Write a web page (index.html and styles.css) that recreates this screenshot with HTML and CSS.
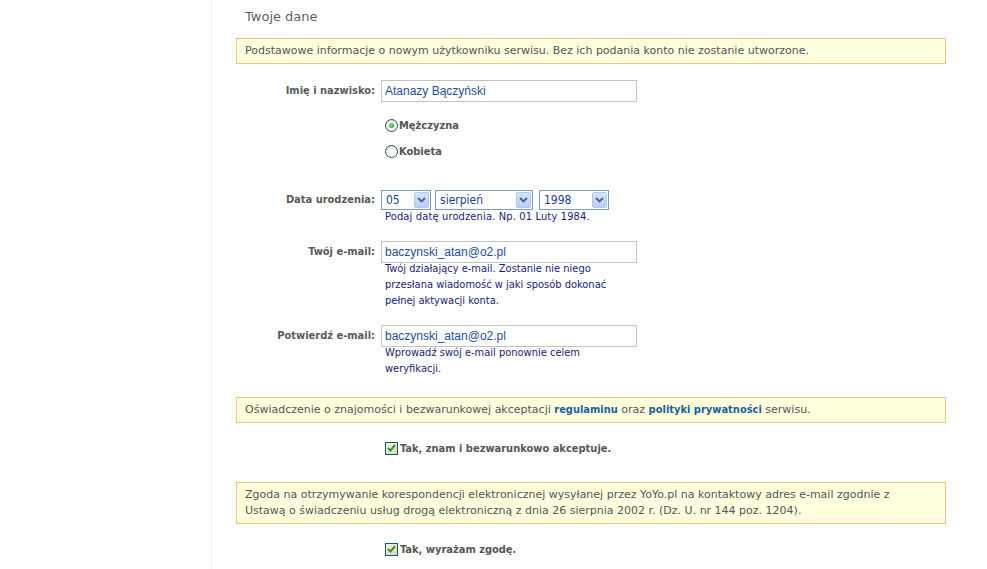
FILE: index.html
```html
<!DOCTYPE html>
<html lang="pl">
<head>
<meta charset="utf-8">
<title>Twoje dane</title>
<link rel="stylesheet" href="styles.css">
</head>
<body>
<div class="page">
  <div class="side"></div>
  <main class="content">
    <h2 class="title">Twoje dane</h2>
    <div class="notice">Podstawowe informacje o nowym użytkowniku serwisu. Bez ich podania konto nie zostanie utworzone.</div>

    <div class="form">
      <div class="row row-name">
        <label class="lbl">Imię i nazwisko:</label>
        <div class="field"><div class="input">Atanazy Bączyński</div></div>
      </div>

      <div class="row row-gender">
        <div></div>
        <div class="field">
          <div class="opt"><span class="radio checked"></span>Mężczyzna</div>
          <div class="opt"><span class="radio"></span>Kobieta</div>
        </div>
      </div>

      <div class="row row-date">
        <label class="lbl lbl-select">Data urodzenia:</label>
        <div class="field">
          <div class="selects">
            <div class="select s-day"><span class="val">05</span><span class="arrow"><svg width="9" height="6" viewBox="0 0 9 6"><path d="M1 1 L4.5 4.5 L8 1" fill="none" stroke="#4d6185" stroke-width="1.8"/></svg></span></div>
            <div class="select s-month"><span class="val">sierpień</span><span class="arrow"><svg width="9" height="6" viewBox="0 0 9 6"><path d="M1 1 L4.5 4.5 L8 1" fill="none" stroke="#4d6185" stroke-width="1.8"/></svg></span></div>
            <div class="select s-year"><span class="val">1998</span><span class="arrow"><svg width="9" height="6" viewBox="0 0 9 6"><path d="M1 1 L4.5 4.5 L8 1" fill="none" stroke="#4d6185" stroke-width="1.8"/></svg></span></div>
          </div>
          <div class="hint hint-date">Podaj datę urodzenia. Np. 01 Luty 1984.</div>
        </div>
      </div>

      <div class="row row-mail">
        <label class="lbl">Twój e-mail:</label>
        <div class="field">
          <div class="input">baczynski_atan@o2.pl</div>
          <div class="hint">Twój działający e-mail. Zostanie nie niego przesłana wiadomość w jaki sposób dokonać pełnej aktywacji konta.</div>
        </div>
      </div>

      <div class="row row-mail2">
        <label class="lbl">Potwierdź e-mail:</label>
        <div class="field">
          <div class="input">baczynski_atan@o2.pl</div>
          <div class="hint">Wprowadź swój e-mail ponownie celem weryfikacji.</div>
        </div>
      </div>
    </div>

    <div class="notice notice-terms">Oświadczenie o znajomości i bezwarunkowej akceptacji <a class="link" href="#">regulaminu</a> oraz <a class="link" href="#">polityki prywatności</a> serwisu.</div>
    <div class="row row-check">
      <div></div>
      <div class="field"><div class="opt"><span class="check"><svg width="9" height="8" viewBox="0 0 9 8"><path d="M1 4 L3.5 6.5 L8 1.2" fill="none" stroke="#21a121" stroke-width="2"/></svg></span>Tak, znam i bezwarunkowo akceptuje.</div></div>
    </div>

    <div class="notice notice-consent">Zgoda na otrzymywanie korespondencji elektronicznej wysyłanej przez YoYo.pl na kontaktowy adres e-mail zgodnie z Ustawą o świadczeniu usług drogą elektroniczną z dnia 26 sierpnia 2002 r. (Dz. U. nr 144 poz. 1204).</div>
    <div class="row row-check">
      <div></div>
      <div class="field"><div class="opt"><span class="check"><svg width="9" height="8" viewBox="0 0 9 8"><path d="M1 4 L3.5 6.5 L8 1.2" fill="none" stroke="#21a121" stroke-width="2"/></svg></span>Tak, wyrażam zgodę.</div></div>
    </div>
  </main>
</div>
</body>
</html>
```

FILE: styles.css
```css
* { box-sizing: border-box; }
html, body { margin: 0; padding: 0; background: #fff; }
body {
  font-family: "DejaVu Sans Condensed", "DejaVu Sans", Verdana, sans-serif;
  font-size: 11px;
  color: #555;
  height: 569px;
  overflow: hidden;
}
.page { display: flex; height: 569px; }
.side { width: 211px; flex: none; }
.content {
  width: 735px;
  border-left: 1px solid #eeeeee;
  padding-left: 24px;
  padding-top: 9px;
}
.title {
  margin: 0 0 13px 9px;
  font-family: "DejaVu Sans", Verdana, sans-serif;
  font-size: 13px;
  line-height: 16px;
  font-weight: normal;
  color: #5f5f5f;
}
.notice {
  border: 1px solid #f2c27f;
  background: #ffffdd;
  padding: 4px 8px;
  line-height: 16px;
  color: #555;
  font-family: "DejaVu Sans", Verdana, sans-serif;
}
.form { margin-top: 16px; }
.row {
  display: grid;
  grid-template-columns: 139px 1fr;
  column-gap: 6px;
}
.lbl {
  text-align: right;
  font-weight: bold;
  color: #5a5a5a;
  line-height: 22px;
}
.lbl-select { line-height: 20px; }
.input {
  width: 256px;
  height: 22px;
  border: 1px solid #c4c4c4;
  padding: 0 3px;
  font-family: "Liberation Sans", Arial, sans-serif;
  font-size: 12px;
  line-height: 20px;
  color: #1f4e9c;
}
.row-gender { margin-top: 10px; }
.opt {
  display: flex;
  align-items: center;
  height: 26px;
  font-weight: bold;
  color: #555;
  padding-left: 4px;
  font-size: 11px;
}
.radio {
  width: 13px;
  height: 13px;
  border-radius: 50%;
  border: 1px solid #2f4d6e;
  background: radial-gradient(circle at 60% 65%, #ffffff 0, #f2f2ee 50%, #d8d8d0 100%);
  margin-right: 1px;
  position: relative;
  flex: none;
}
.radio.checked::after {
  content: "";
  position: absolute;
  left: 3px;
  top: 3px;
  width: 5px;
  height: 5px;
  border-radius: 50%;
  background: radial-gradient(circle at 40% 40%, #9be09b 0, #2ca52c 70%);
}
.row-date { margin-top: 26px; }
.selects { display: flex; gap: 4px; }
.select {
  display: flex;
  align-items: center;
  height: 20px;
  border: 1px solid #7f9db9;
  background: #fff;
  padding: 1px;
}
.s-day { width: 50px; }
.s-month { width: 98px; }
.s-year { width: 70px; margin-left: 2px; }
.val {
  flex: 1;
  padding-left: 3px;
  font-family: "DejaVu Sans Condensed", "DejaVu Sans", sans-serif;
  font-size: 12px;
  color: #1c3f8c;
  line-height: 16px;
}
.arrow {
  width: 15px;
  height: 16px;
  background: linear-gradient(#d6e3fb, #b8cdf6);
  border: 1px solid #b5c6ee;
  border-radius: 2px;
  display: flex;
  align-items: center;
  justify-content: center;
}
.hint {
  width: 236px;
  padding-left: 4px;
  color: #1a1a7a;
  line-height: 16px;
  margin-top: -2px;
}
.hint-date { width: auto; margin-top: -1px; letter-spacing: 0.15px; }
.row-mail { margin-top: 16px; }
.row-mail2 { margin-top: 16px; }
.notice-terms { margin-top: 20px; }
.link { color: #1d5e9e; font-weight: bold; text-decoration: none; font-family: "DejaVu Sans Condensed", "DejaVu Sans", sans-serif; }
.row-check { margin-top: 12px; }
.check {
  width: 13px;
  height: 13px;
  border: 1px solid #1c5180;
  background: linear-gradient(135deg, #f5f1dc, #ddd7b8);
  display: flex;
  align-items: center;
  justify-content: center;
  margin-right: 2px;
  flex: none;
}
.notice-consent { margin-top: 21px; padding-right: 46px; }
```
